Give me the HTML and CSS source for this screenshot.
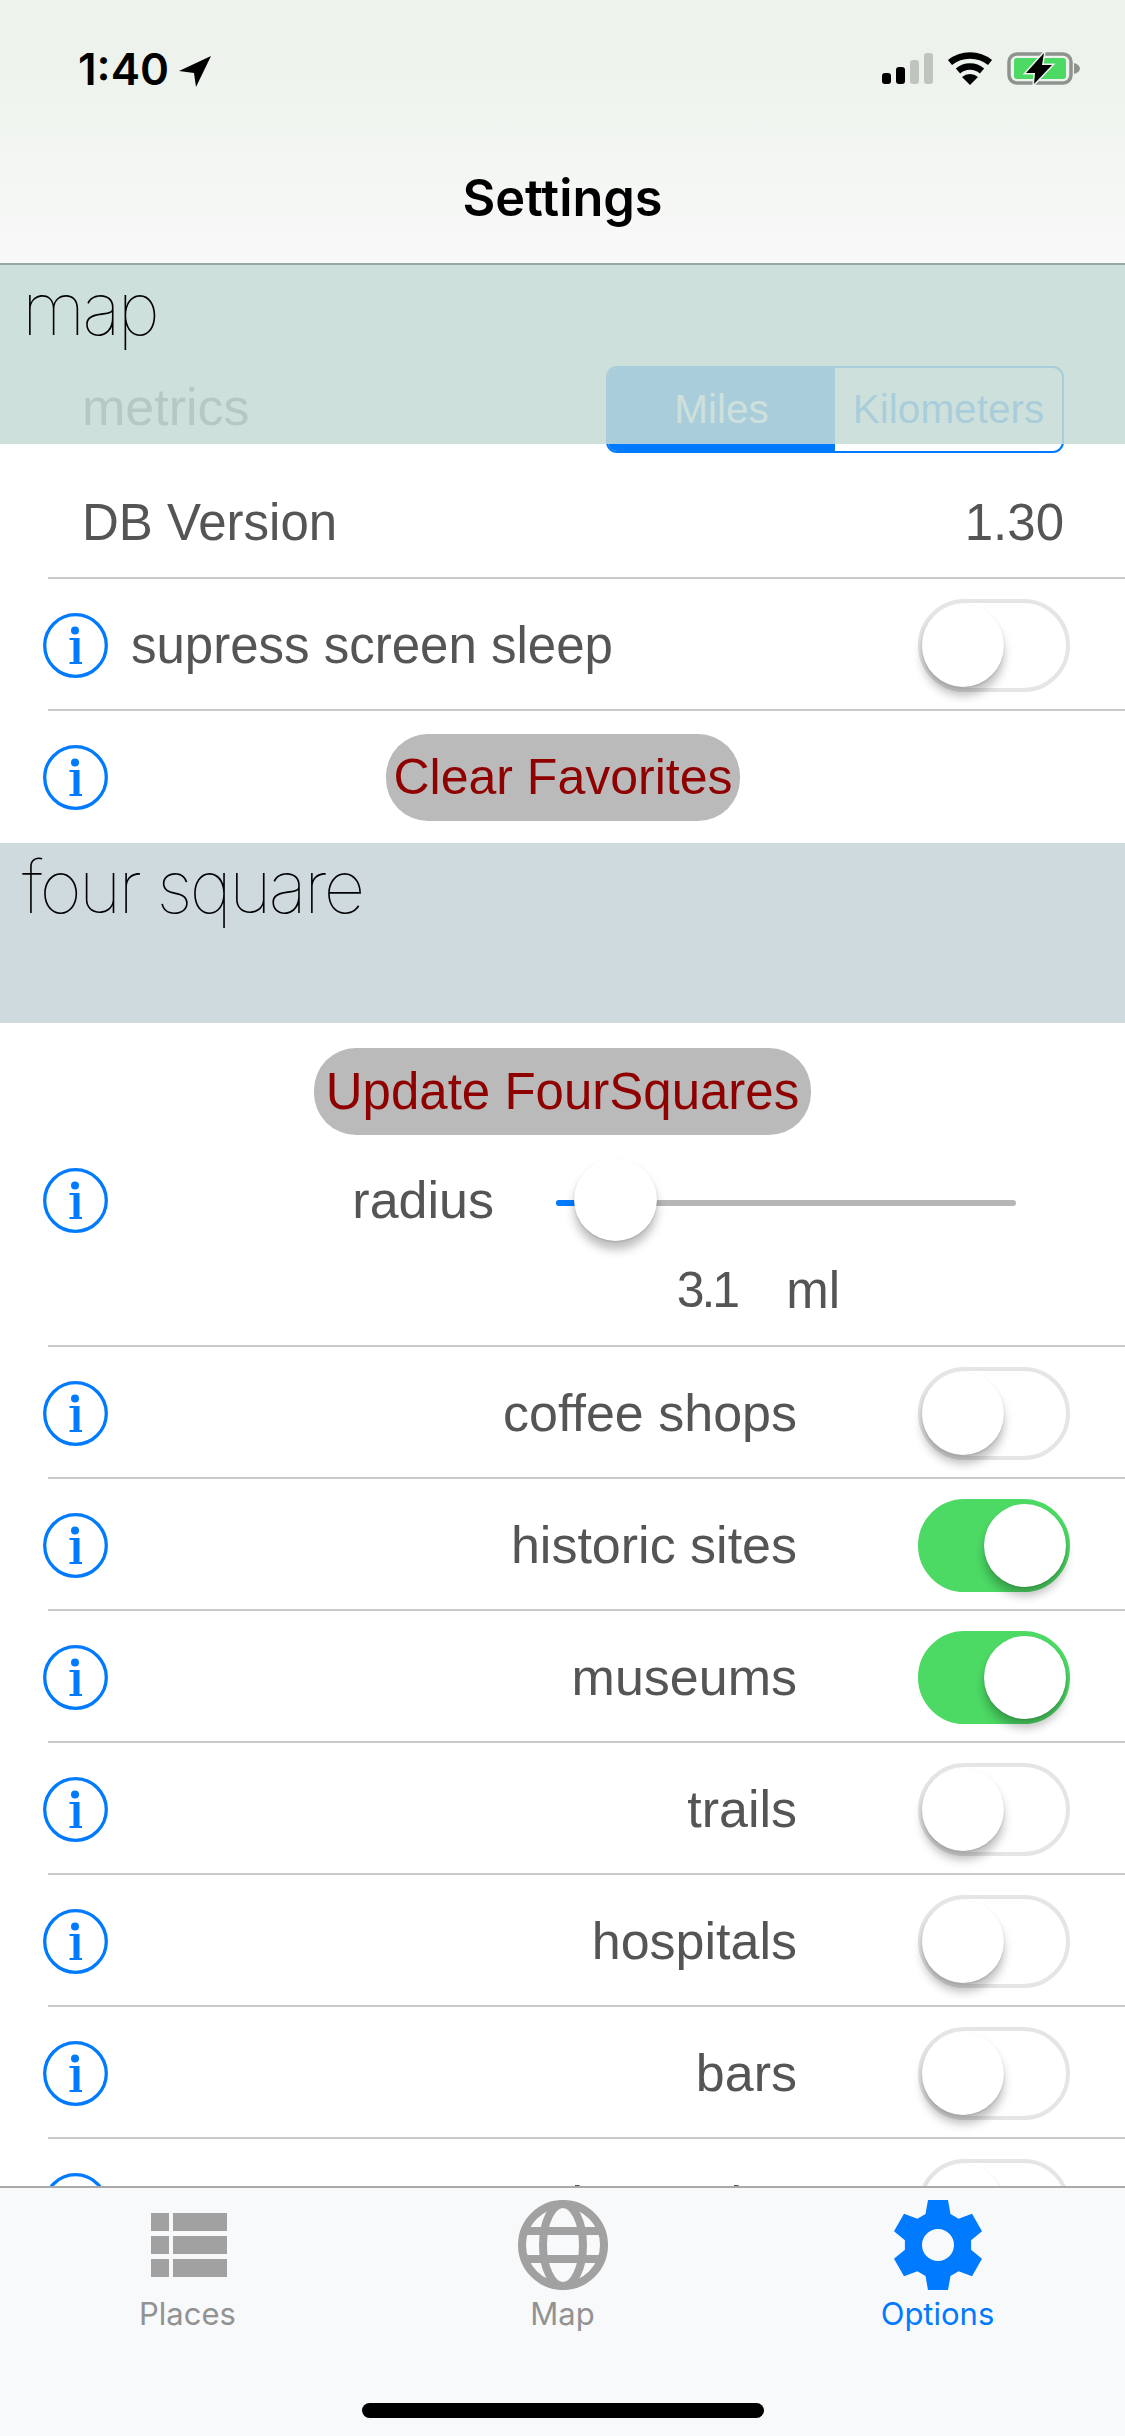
FILE: index.html
```html
<!DOCTYPE html>
<html lang="en">
<head>
  <meta charset="UTF-8" />
  <title>Settings</title>
  <link rel="stylesheet" href="styles.css">
</head>
<body>
  <svg class="icon-defs" width="0" height="0">
    <symbol id="info" viewBox="0 0 65 65">
      <circle cx="32.5" cy="32.5" r="30.8" fill="none" stroke="#007aff" stroke-width="3.3"/>
      <circle cx="32" cy="17.5" r="4" fill="#007aff"/>
      <path d="M26.5 25H36.5V49H39V51H26.5V49H30.5V27H26.5Z" fill="#007aff"/>
    </symbol>
  </svg>

  <div class="screen">
    <header class="navbar">
      <div class="statusbar">
        <div class="status-time">
          <span>1:40</span>
          <svg class="arrow" width="32" height="31" viewBox="0 0 32 31"><polygon points="32,0 0,15 15,17 17,31"/></svg>
        </div>
        <div class="status-icons">
          <div class="signal">
            <i class="bar bar1"></i><i class="bar bar2"></i><i class="bar bar3"></i><i class="bar bar4"></i>
          </div>
          <svg class="wifi" width="46" height="33" viewBox="0 0 46 33">
            <path d="M3 10.500A32 32 0 0 1 43 10.500M11 19A18 18 0 0 1 35 19" fill="none" stroke="#000" stroke-width="6.5"/>
            <path d="M23 33L15 25A12 12 0 0 1 31 25Z"/>
          </svg>
          <svg class="battery" width="74" height="33" viewBox="0 0 74 33">
            <rect x="2" y="2" width="62" height="29" rx="8" fill="none" stroke="#8f938e" stroke-width="3.500"/>
            <rect x="7" y="6" width="52" height="21" rx="3" fill="#4cd964"/>
            <path d="M67 11c4 1 6 3.500 6 5.500s-2 4.500-6 5.500z" fill="#8f938e"/>
            <path d="M37 1L19 21H28L27 32L45 13H35Z" stroke="#edf3ec" stroke-width="3" paint-order="stroke"/>
          </svg>
        </div>
      </div>
      <h1 class="nav-title">Settings</h1>
    </header>

    <main class="list">
      <div class="section-header section-map">map</div>

      <div class="row metrics-row">
        <span class="row-text metrics-label">metrics</span>
        <div class="segmented">
          <span class="segment segment-on">Miles</span>
          <span class="segment">Kilometers</span>
        </div>
      </div>

      <div class="row version-row">
        <span class="row-text">DB Version</span>
        <span class="row-text">1.30</span>
      </div>

      <div class="row option-row">
        <svg class="info"><use href="#info"/></svg>
        <span class="row-text sleep-label">supress screen sleep</span>
        <div class="switch"><div class="thumb"></div></div>
      </div>

      <div class="row button-row plain">
        <svg class="info"><use href="#info"/></svg>
        <button class="pill clear-btn">Clear Favorites</button>
      </div>

      <div class="section-header section-four">four square</div>

      <div class="radius-block">
        <button class="pill update-btn">Update FourSquares</button>
        <div class="radius-row">
          <svg class="info"><use href="#info"/></svg>
          <span class="row-text radius-label">radius</span>
          <div class="slider">
            <div class="slider-fill"></div>
            <div class="slider-thumb"></div>
          </div>
        </div>
        <div class="radius-value">
          <span class="row-text radius-num">3.1</span>
          <span class="row-text">ml</span>
        </div>
      </div>

      <div class="row option-row">
        <svg class="info"><use href="#info"/></svg>
        <span class="row-text option-label">coffee shops</span>
        <div class="switch"><div class="thumb"></div></div>
      </div>
      <div class="row option-row">
        <svg class="info"><use href="#info"/></svg>
        <span class="row-text option-label">historic sites</span>
        <div class="switch on"><div class="thumb"></div></div>
      </div>
      <div class="row option-row">
        <svg class="info"><use href="#info"/></svg>
        <span class="row-text option-label">museums</span>
        <div class="switch on"><div class="thumb"></div></div>
      </div>
      <div class="row option-row">
        <svg class="info"><use href="#info"/></svg>
        <span class="row-text option-label">trails</span>
        <div class="switch"><div class="thumb"></div></div>
      </div>
      <div class="row option-row">
        <svg class="info"><use href="#info"/></svg>
        <span class="row-text option-label">hospitals</span>
        <div class="switch"><div class="thumb"></div></div>
      </div>
      <div class="row option-row">
        <svg class="info"><use href="#info"/></svg>
        <span class="row-text option-label">bars</span>
        <div class="switch"><div class="thumb"></div></div>
      </div>
      <div class="row option-row">
        <svg class="info"><use href="#info"/></svg>
        <span class="row-text option-label">breweries</span>
        <div class="switch"><div class="thumb"></div></div>
      </div>
    </main>

    <nav class="tabbar">
      <div class="tabs">
        <div class="tab">
          <div class="tab-icon">
            <div class="places-icon">
              <i></i><i></i><i></i><i></i><i></i><i></i>
            </div>
          </div>
          <span class="tab-label">Places</span>
        </div>
        <div class="tab">
          <div class="tab-icon">
            <svg width="90" height="90" viewBox="0 0 90 90" fill="none" stroke="#a1a1a1" stroke-width="8">
              <circle cx="45" cy="45" r="41"/>
              <ellipse cx="45" cy="45" rx="20" ry="41"/>
              <path d="M6 31H84M6 59H84"/>
            </svg>
          </div>
          <span class="tab-label">Map</span>
        </div>
        <div class="tab tab-active">
          <div class="tab-icon">
            <svg width="90" height="90" viewBox="0 0 90 90">
              <path fill="#007aff" fill-rule="evenodd" d="M35 0H55L57.500 14 65.600 18.700 79 13.840 89 31.160 78.100 40.330V49.670L89 58.840 79 76.160 65.600 71.330 57.500 76 55 90H35L32.500 76 24.400 71.330 11 76.160 1 58.840 11.900 49.670V40.330L1 31.160 11 13.840 24.400 18.700 32.500 14ZM45 29a16 16 0 1 0 0 32a16 16 0 1 0 0-32Z"/>
            </svg>
          </div>
          <span class="tab-label">Options</span>
        </div>
      </div>
      <div class="home-indicator"></div>
    </nav>
  </div>
</body>
</html>
```

FILE: styles.css
```css
* {
  box-sizing: border-box;
}

body {
  margin: 0;
  font-family: 'Liberation Sans', Arial, sans-serif;
  background-color: #fff;
}

.icon-defs {
  position: absolute;
}

.screen {
  display: flex;
  flex-direction: column;
  width: 1125px;
  height: 2436px;
  overflow: hidden;
}

/* nav bar + status bar */
.navbar {
  flex: none;
  height: 265px;
  background: linear-gradient(#edf3ec, #edf3ec 25%, #f9f9f9);
  border-bottom: 2px solid #97a6a0;
}

.statusbar {
  display: flex;
  justify-content: space-between;
  align-items: flex-start;
  height: 160px;
  padding: 52px 44px 0 78px;
}

.status-time {
  display: flex;
  align-items: flex-start;
  gap: 10px;
  font-family: Inter, sans-serif;
  font-weight: 600;
  font-size: 44px;
  line-height: 34px;
  color: #000;
}

.arrow {
  margin-top: 4px;
}

.status-icons {
  display: flex;
  align-items: flex-start;
  gap: 14px;
}

.signal {
  display: flex;
  align-items: flex-end;
  gap: 5px;
  height: 32px;
}

.bar {
  width: 9px;
  border-radius: 3px;
  background: #000;
}

.bar1 { height: 11px; }
.bar2 { height: 17px; }
.bar3 { height: 24px; background: #c0c4bf; }
.bar4 { height: 31px; background: #c0c4bf; }

.nav-title {
  margin: 0;
  font-family: Inter, sans-serif;
  font-weight: 600;
  font-size: 50.5px;
  line-height: 76px;
  text-align: center;
  color: #000;
}

/* table */
.list {
  flex: 1;
  overflow: hidden;
}

.section-header {
  position: relative;
  z-index: 1;
  padding: 0 22px;
  font-family: Inter, sans-serif;
  font-weight: 100;
  font-size: 73px;
  letter-spacing: -3px;
  line-height: 88px;
  color: #000;
}

.section-map {
  height: 179px;
  margin-bottom: -98px;
  background: rgba(197, 219, 213, 0.86);
}

.section-four {
  height: 180px;
  background: #cfdade;
}

.row {
  display: flex;
  align-items: center;
  height: 132px;
  padding-left: 43px;
  background: linear-gradient(#c9c9c9, #c9c9c9) 48px 100% / 100% 2px no-repeat;
}

.row.plain {
  background: none;
}

.row-text {
  font-size: 51px;
  color: #555;
}

.info {
  flex: none;
  width: 65px;
  height: 65px;
}

.metrics-row {
  justify-content: space-between;
  height: 107px;
  padding: 20px 61px 0 82px;
  background: none;
}

.metrics-label {
  margin-bottom: 5px;
  font-size: 52px;
}

.segmented {
  display: flex;
  width: 458px;
  height: 87px;
  border: 2px solid #007aff;
  border-radius: 11px;
  overflow: hidden;
}

.segment {
  flex: 1;
  display: flex;
  align-items: center;
  justify-content: center;
  font-size: 40.5px;
  color: #007aff;
}

.segment-on {
  background: #007aff;
  color: #fff;
}

.version-row {
  justify-content: space-between;
  height: 126px;
  padding: 12px 61px 0 82px;
}

.sleep-label {
  margin-left: 23px;
}

.option-label {
  flex: 1;
  margin-right: 121px;
  font-size: 52px;
  text-align: right;
}

.switch {
  flex: none;
  display: flex;
  align-items: center;
  width: 152px;
  height: 93px;
  margin: 0 55px 0 auto;
  padding: 0 4px;
  border: 4px solid #e5e5e5;
  border-radius: 47px;
  background: #fff;
}

.switch.on {
  justify-content: flex-end;
  border-color: #4cd964;
  background: #4cd964;
}

.thumb {
  width: 82px;
  height: 83px;
  margin: 0 -4px;
  border-radius: 50%;
  background: #fff;
  box-shadow: 0 9px 10px rgba(0, 0, 0, 0.25), 0 1px 2px rgba(0, 0, 0, 0.15);
}

.pill {
  display: block;
  height: 87px;
  padding: 0;
  border: none;
  border-radius: 42px;
  background: #bababa;
  font-family: 'Liberation Sans', Arial, sans-serif;
  font-size: 50px;
  color: #8f0000;
}

.clear-btn {
  width: 354px;
  margin-left: 278px;
}

.radius-block {
  height: 324px;
  padding-top: 25px;
  background: linear-gradient(#c9c9c9, #c9c9c9) 48px 100% / 100% 2px no-repeat;
}

.update-btn {
  width: 497px;
  margin: 0 auto;
  font-size: 51px;
}

.radius-row {
  display: flex;
  align-items: center;
  height: 90px;
  margin-top: 20px;
  padding-left: 43px;
}

.radius-label {
  width: 386px;
  font-size: 52px;
  text-align: right;
}

.slider {
  position: relative;
  width: 460px;
  height: 6px;
  margin: 6px 0 0 62px;
  border-radius: 3px;
  background: #b6b6b6;
}

.slider-fill {
  width: 20px;
  height: 6px;
  border-radius: 3px 0 0 3px;
  background: #007aff;
}

.slider-thumb {
  position: absolute;
  left: 18px;
  top: -42px;
  width: 83px;
  height: 83px;
  border-radius: 50%;
  background: #fff;
  box-shadow: 0 9px 10px rgba(0, 0, 0, 0.25), 0 1px 2px rgba(0, 0, 0, 0.15);
}

.radius-value {
  display: flex;
  justify-content: flex-end;
  gap: 49px;
  margin-top: 16px;
  padding-right: 285px;
}

.radius-num {
  font-size: 50px;
  letter-spacing: -3px;
}

/* tab bar */
.tabbar {
  flex: none;
  display: flex;
  flex-direction: column;
  height: 250px;
  padding-top: 12px;
  background: #f8f9fa;
  border-top: 2px solid #a9a9a9;
}

.tabs {
  display: flex;
}

.tab {
  flex: 1;
  display: flex;
  flex-direction: column;
  align-items: center;
  color: #929292;
}

.tab-active {
  color: #007aff;
}

.tab-icon {
  display: flex;
  align-items: center;
  justify-content: center;
  height: 90px;
}

.places-icon {
  display: grid;
  grid-template-columns: 18px 54px;
  grid-auto-rows: 18px;
  gap: 5px 4px;
  margin-left: 3px;
}

.places-icon i {
  background: #a1a1a1;
}

.tab-label {
  margin-top: 6px;
  font-family: Inter, sans-serif;
  font-size: 31px;
  line-height: 36px;
}

.home-indicator {
  width: 402px;
  height: 15px;
  margin: 71px auto 0;
  border-radius: 8px;
  background: #000;
}
```
